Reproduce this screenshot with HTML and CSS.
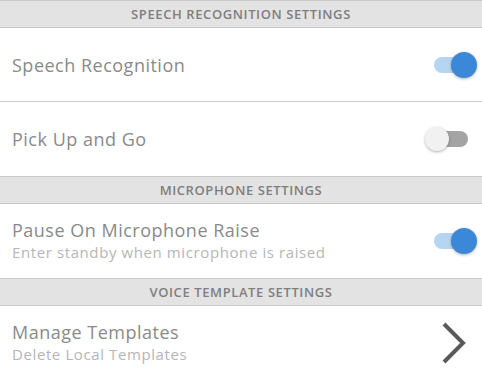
FILE: index.html
```html
<!DOCTYPE html>
<html lang="en">

<head>
    <meta charset="UTF-8">
    <title>Settings</title>
    <link rel="stylesheet" href="styles.css">
</head>

<body>
    <div class="settings">
        <div class="group_title">SPEECH RECOGNITION SETTINGS</div>
        <div class="row sep">
            <div class="label">
                <div class="name">Speech Recognition</div>
            </div>
            <div class="toggle on"><span class="knob"></span></div>
        </div>
        <div class="row">
            <div class="label">
                <div class="name">Pick Up and Go</div>
            </div>
            <div class="toggle"><span class="knob"></span></div>
        </div>

        <div class="group_title">MICROPHONE SETTINGS</div>
        <div class="row">
            <div class="label">
                <div class="name">Pause On Microphone Raise</div>
                <div class="desc">Enter standby when microphone is raised</div>
            </div>
            <div class="toggle on"><span class="knob"></span></div>
        </div>

        <div class="group_title">VOICE TEMPLATE SETTINGS</div>
        <div class="row">
            <div class="label">
                <div class="name">Manage Templates</div>
                <div class="desc">Delete Local Templates</div>
            </div>
            <svg class="chevron" width="30" height="44" viewBox="0 0 30 44">
                <polyline points="4,3 23,22 4,41" fill="none" stroke="#5a5a5a" stroke-width="4" />
            </svg>
        </div>
    </div>
</body>

</html>
```

FILE: styles.css
```css
body {
    margin: 0px;
    padding: 0px;
    background-color: #ffffff;
    font-family: "Open Sans", "Liberation Sans", sans-serif;
}

.settings {
    display: flex;
    flex-direction: column;
    width: 482px;
}

.group_title {
    display: flex;
    height: 26px;
    justify-content: center;
    align-items: center;
    background-color: #e3e3e3;
    border-top: 1px solid #c9c9c9;
    border-bottom: 1px solid #c9c9c9;
    color: #7e7e7e;
    font-size: 13px;
    font-weight: 600;
    letter-spacing: 0.6px;
}

.row {
    display: flex;
    height: 74px;
    box-sizing: border-box;
    padding: 0px 14px 0px 12px;
    align-items: center;
    justify-content: space-between;
}

.sep {
    border-bottom: 1px solid #d0d0d0;
}

.label {
    display: flex;
    flex-direction: column;
}

.name {
    color: #8a8a8a;
    font-size: 18px;
    line-height: 22px;
    letter-spacing: 0.5px;
}

.desc {
    color: #b6b6b6;
    font-size: 15px;
    line-height: 22px;
    letter-spacing: 0.6px;
}

.toggle {
    position: relative;
    width: 34px;
    height: 16px;
    border-radius: 8px;
    background-color: #a4a4a4;
}

.toggle .knob {
    position: absolute;
    top: -4px;
    left: -9px;
    width: 24px;
    height: 24px;
    border-radius: 50%;
    background-color: #f1f1f1;
    box-shadow: 0px 1px 3px rgba(0, 0, 0, 0.3);
}

.toggle.on {
    background-color: #b5d6f1;
}

.toggle.on .knob {
    top: -5px;
    left: 17px;
    width: 26px;
    height: 26px;
    background-color: #3b88d8;
}

.chevron {
    margin-right: -2px;
}
```
